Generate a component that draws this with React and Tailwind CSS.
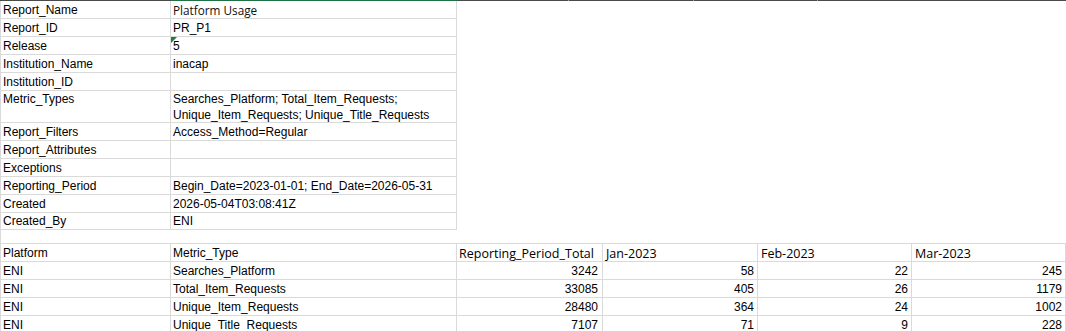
import React from 'react';

const arial = { fontFamily: '"Liberation Sans", Arial, sans-serif' };

const info = [
  ['Report_Name', 'Platform Usage', 'h-[18px]', 'ui'],
  ['Report_ID', 'PR_P1', 'h-[18px]'],
  ['Release', '5', 'h-[18px]', 'flag'],
  ['Institution_Name', 'inacap', 'h-[18px]'],
  ['Institution_ID', '', 'h-[18px]'],
  ['Metric_Types', 'wrap', 'h-[32px]'],
  ['Report_Filters', 'Access_Method=Regular', 'h-[18px]'],
  ['Report_Attributes', '', 'h-[18px]'],
  ['Exceptions', '', 'h-[18px]'],
  ['Reporting_Period', 'Begin_Date=2023-01-01; End_Date=2026-05-31', 'h-[18px]'],
  ['Created', '2026-05-04T03:08:41Z', 'h-[18px]'],
  ['Created_By', 'ENI', 'h-[17px]'],
];

const rows = [
  ['ENI', 'Searches_Platform', 3242, 58, 22, 245],
  ['ENI', 'Total_Item_Requests', 33085, 405, 26, 1179],
  ['ENI', 'Unique_Item_Requests', 28480, 364, 24, 1002],
  ['ENI', 'Unique_Title_Requests', 7107, 71, 9, 228],
];

function InfoRow({ label, value, h, kind }) {
  if (value === 'wrap') {
    return (
      <div className={`flex ${h}`}>
        <div className="w-[170px] shrink-0 border-b border-r border-[#dadada] px-[2px] leading-[16px]">{label}</div>
        <div className="w-[286px] shrink-0 border-b border-r border-[#dadada] px-[2px] leading-[16px]">
          Searches_Platform; Total_Item_Requests;
          <br />
          Unique_Item_Requests; Unique_Title_Requests
        </div>
      </div>
    );
  }
  return (
    <div className={`flex ${h}`}>
      <div className="w-[170px] shrink-0 flex items-end border-b border-r border-[#dadada] px-[2px] leading-[15px]">{label}</div>
      <div className="relative w-[286px] shrink-0 flex items-end border-b border-r border-[#dadada] px-[2px] leading-[15px]">
        {kind === 'flag' && (
          <span className="absolute left-0 top-0 h-0 w-0 border-t-[6px] border-r-[6px] border-t-[#1e7e34] border-r-transparent" />
        )}
        <span className={kind === 'ui' ? 'font-["Open_Sans"] text-[11.75px] text-[#111]' : ''}>{value}</span>
      </div>
    </div>
  );
}

export default function App() {
  return (
    <div className="w-[1066px] h-[331px] overflow-hidden bg-white text-black text-[12px]" style={arial}>
      <div className="flex h-px bg-[#4a4a4a]">
        <div className="w-[171px]" />
        <div className="w-[286px] bg-[#1e7145]" />
        <div className="w-[111px]" />
        <div className="w-px bg-[#9a9a9a]" />
        <div className="w-[124px]" />
        <div className="w-px bg-[#9a9a9a]" />
        <div className="w-[123px]" />
        <div className="w-px bg-[#9a9a9a]" />
      </div>

      <div className="border-l border-[#dadada]">
        {info.map(([label, value, h, kind]) => (
          <InfoRow key={label} label={label} value={value} h={h} kind={kind} />
        ))}

        <div className="h-[14px] border-b border-[#dadada]" />

        <div className="flex h-[18px]">
          <div className="w-[170px] shrink-0 flex items-end border-b border-r border-[#dadada] px-[2px] leading-[15px]">Platform</div>
          <div className="w-[286px] shrink-0 flex items-end border-b border-r border-[#dadada] px-[2px] leading-[15px]">Metric_Type</div>
          <div className="w-[146px] shrink-0 flex items-end border-b border-r border-[#dadada] px-[2px] leading-[15px] font-['Open_Sans'] text-[12.5px]">Reporting_Period_Total</div>
          <div className="w-[155px] shrink-0 flex items-end border-b border-r border-[#dadada] px-[3px] leading-[15px] font-['Open_Sans'] text-[12.5px]">Jan-2023</div>
          <div className="w-[154px] shrink-0 flex items-end border-b border-r border-[#dadada] px-[3px] leading-[15px] font-['Open_Sans'] text-[12.5px]">Feb-2023</div>
          <div className="flex-1 flex items-end border-b border-r border-[#dadada] px-[3px] leading-[15px] font-['Open_Sans'] text-[12.5px]">Mar-2023</div>
        </div>

        {rows.map((r) => (
          <div key={r[1]} className="flex h-[18px]">
            <div className="w-[170px] shrink-0 flex items-end border-b border-r border-[#dadada] px-[2px] leading-[15px]">{r[0]}</div>
            <div className="w-[286px] shrink-0 flex items-end border-b border-r border-[#dadada] px-[2px] leading-[15px]">{r[1]}</div>
            <div className="w-[146px] shrink-0 flex items-end justify-end border-b border-r border-[#dadada] pr-[4px] leading-[15px]">{r[2]}</div>
            <div className="w-[155px] shrink-0 flex items-end justify-end border-b border-r border-[#dadada] pr-[3px] leading-[15px]">{r[3]}</div>
            <div className="w-[154px] shrink-0 flex items-end justify-end border-b border-r border-[#dadada] pr-[3px] leading-[15px]">{r[4]}</div>
            <div className="flex-1 flex items-end justify-end border-b border-r border-[#dadada] pr-[3px] leading-[15px]">{r[5]}</div>
          </div>
        ))}
      </div>
    </div>
  );
}
